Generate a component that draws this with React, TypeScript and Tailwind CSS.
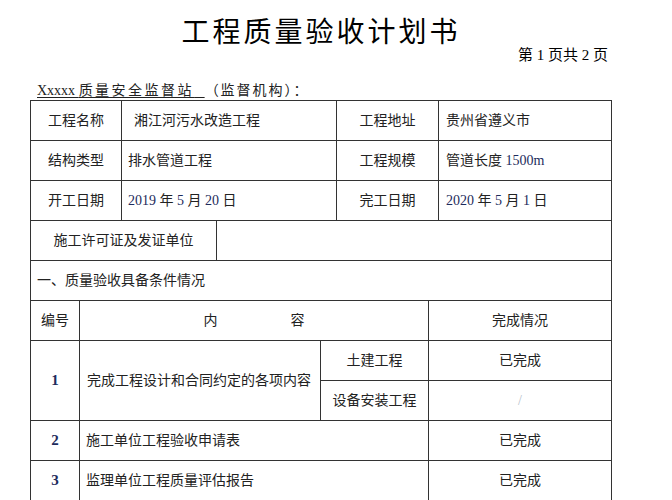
const font = "font-['Liberation_Serif','Noto_Sans_CJK_SC',serif]";

function Num({ children, bold }: { children: React.ReactNode; bold?: boolean }) {
  return <span className={`text-[#1d2b5c] ${bold ? "font-bold" : ""}`}>{children}</span>;
}

const cell = "border-r border-b border-[#333] flex items-center h-[40px] text-[14px] text-[#222]";

export default function App() {
  return (
    <div className={`w-[672px] h-[500px] bg-white overflow-hidden ${font}`}>
      <div className="ml-[30px] w-[582px]">
        <h1 className="pt-[18px] text-center text-[28px] leading-[30px] tracking-[3px] text-black font-normal">
          工程质量验收计划书
        </h1>
        <div className="text-right pr-[4px] text-[15px] leading-[14px] text-black">第 1 页共 2 页</div>
        <div className="mt-[20px] pl-[7px] text-[14px] leading-[18px] text-[#222] whitespace-pre">
          <span className="underline underline-offset-2">
            Xxxxx <span className="tracking-[2.5px]">质量安全监督站</span>
            {"   "}
          </span>
          <span className="tracking-[2px]">（监督机构）：</span>
        </div>

        <div className="border-l border-t border-[#333]">
          <div className="grid grid-cols-[91px_215px_102px_173px]">
            <div className={`${cell} justify-center`}>工程名称</div>
            <div className={`${cell} pl-[12px] text-[13px]`}>湘江河污水改造工程</div>
            <div className={`${cell} justify-center`}>工程地址</div>
            <div className={`${cell} pl-[7px]`}>贵州省遵义市</div>

            <div className={`${cell} justify-center`}>结构类型</div>
            <div className={`${cell} pl-[6px]`}>排水管道工程</div>
            <div className={`${cell} justify-center`}>工程规模</div>
            <div className={`${cell} pl-[7px] whitespace-pre`}>
              管道长度 <Num>1500m</Num>
            </div>

            <div className={`${cell} justify-center`}>开工日期</div>
            <div className={`${cell} pl-[6px] whitespace-pre`}>
              <Num>2019</Num> 年 <Num>5</Num> 月 <Num>20</Num> 日
            </div>
            <div className={`${cell} justify-center`}>完工日期</div>
            <div className={`${cell} pl-[7px] whitespace-pre`}>
              <Num>2020</Num> 年 <Num>5</Num> 月 <Num>1</Num> 日
            </div>
          </div>

          <div className="grid grid-cols-[186px_395px]">
            <div className={`${cell} justify-center`}>施工许可证及发证单位</div>
            <div className={cell}></div>
          </div>

          <div className={`${cell} pl-[6px]`}>一、质量验收具备条件情况</div>

          <div className="grid grid-cols-[49px_349px_183px]">
            <div className={`${cell} justify-center`}>编号</div>
            <div className={`${cell} justify-center gap-[73px]`}>
              <span>内</span>
              <span>容</span>
            </div>
            <div className={`${cell} justify-center`}>完成情况</div>
          </div>

          <div className="grid grid-cols-[49px_241px_108px_183px]">
            <div className="row-span-2 border-r border-b border-[#333] flex items-center justify-center text-[15px]">
              <Num bold>1</Num>
            </div>
            <div className="row-span-2 border-r border-b border-[#333] flex items-center pl-[7px] text-[14px] text-[#222]">
              完成工程设计和合同约定的各项内容
            </div>
            <div className={`${cell} justify-center`}>土建工程</div>
            <div className={`${cell} justify-center`}>已完成</div>
            <div className={`${cell} justify-center`}>设备安装工程</div>
            <div className={`${cell} justify-center text-[#b8bfcc] text-[12px]`}>/</div>
          </div>

          <div className="grid grid-cols-[49px_349px_183px]">
            <div className={`${cell} justify-center text-[15px]`}>
              <Num bold>2</Num>
            </div>
            <div className={`${cell} pl-[6px]`}>施工单位工程验收申请表</div>
            <div className={`${cell} justify-center`}>已完成</div>

            <div className={`${cell} justify-center text-[15px]`}>
              <Num bold>3</Num>
            </div>
            <div className={`${cell} pl-[6px]`}>监理单位工程质量评估报告</div>
            <div className={`${cell} justify-center`}>已完成</div>
          </div>
        </div>
      </div>
    </div>
  );
}
